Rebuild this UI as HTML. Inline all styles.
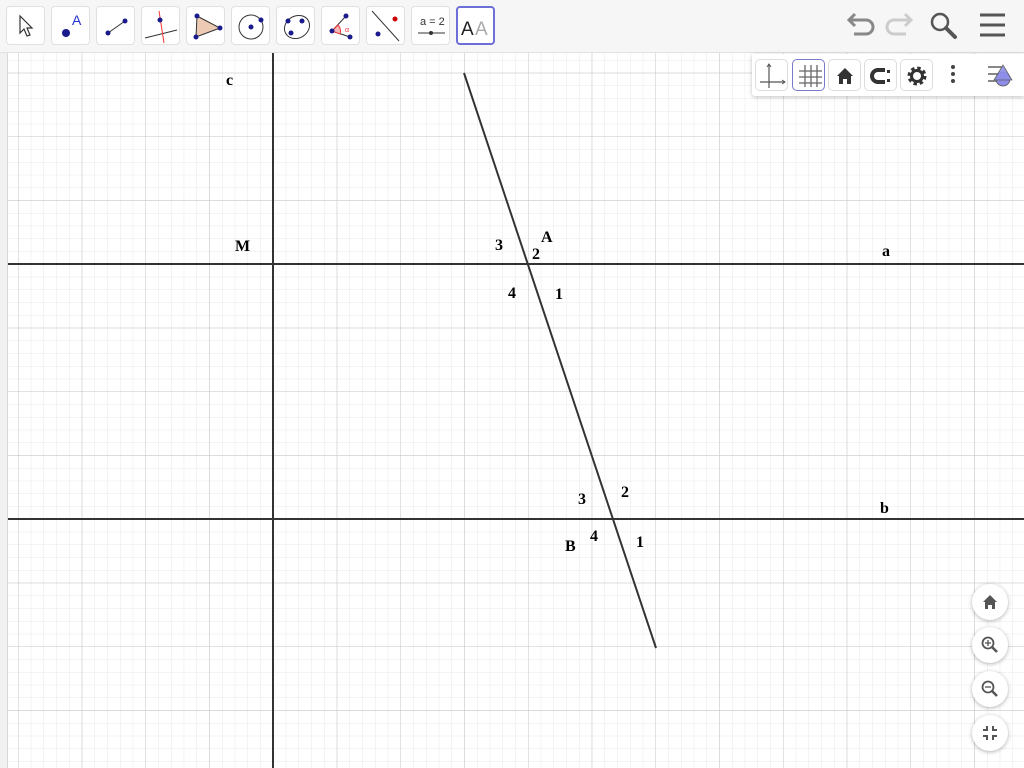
<!DOCTYPE html>
<html><head><meta charset="utf-8"><style>
*{margin:0;padding:0;box-sizing:border-box}
body{width:1024px;height:768px;overflow:hidden;background:#fff;position:relative;font-family:"Liberation Sans",sans-serif}
#tb{position:absolute;left:0;top:0;width:1024px;height:53px;background:#f6f6f6;border-bottom:1px solid #e2e2e2}
.b{position:absolute;top:6px;width:39px;height:39px;background:#fff;border:1px solid #e0e0e0;border-radius:4px}
.b svg{position:absolute;left:0;top:0}
#sb{position:absolute;left:752px;top:54px;width:272px;height:42px;background:#fff;box-shadow:0 1px 4px rgba(0,0,0,.25);border-radius:0 0 0 3px}
.s{position:absolute;top:5px;width:33px;height:32px;border:1px solid #ddd;border-radius:5px;background:#fff}
.z{position:absolute;left:972px;width:36px;height:36px;border-radius:50%;background:#fff;box-shadow:0 1px 4px rgba(0,0,0,.3)}
.z svg{position:absolute;left:0;top:0}
.l{position:absolute;font-family:"Liberation Serif",serif;font-weight:bold;font-size:16px;color:#000}
</style></head><body>
<svg width="1024" height="768" style="position:absolute;left:0;top:0">
<defs>
<pattern id="mi" x="18" y="9" width="12.75" height="12.75" patternUnits="userSpaceOnUse"><path d="M0 0V12.75M0 0H12.75" stroke="#e8e8e8" stroke-width="1" fill="none"/></pattern>
<pattern id="ma" x="18" y="9" width="63.75" height="63.75" patternUnits="userSpaceOnUse"><path d="M0 0V63.75M0 0H63.75" stroke="#c4c4c4" stroke-width="1" fill="none"/></pattern>
</defs>
<rect x="8" y="53" width="1016" height="715" fill="url(#mi)"/>
<rect x="8" y="53" width="1016" height="715" fill="url(#ma)"/>
<rect x="0" y="53" width="8" height="715" fill="#f1f1f1"/>
<line x1="7.5" y1="53" x2="7.5" y2="768" stroke="#d8d8d8"/>
<line x1="273" y1="53" x2="273" y2="768" stroke="#333" stroke-width="2"/>
<line x1="8" y1="264" x2="1024" y2="264" stroke="#333" stroke-width="2"/>
<line x1="8" y1="519" x2="1024" y2="519" stroke="#333" stroke-width="2"/>
<line x1="464" y1="73" x2="656" y2="648" stroke="#333" stroke-width="2"/>
</svg>
<div class="l" style="left:226px;top:72px">c</div>
<div class="l" style="left:235px;top:238px">M</div>
<div class="l" style="left:882px;top:243px">a</div>
<div class="l" style="left:880px;top:500px">b</div>
<div class="l" style="left:541px;top:229px">A</div>
<div class="l" style="left:495px;top:237px">3</div>
<div class="l" style="left:532px;top:246px">2</div>
<div class="l" style="left:508px;top:285px">4</div>
<div class="l" style="left:555px;top:286px">1</div>
<div class="l" style="left:578px;top:491px">3</div>
<div class="l" style="left:621px;top:484px">2</div>
<div class="l" style="left:590px;top:528px">4</div>
<div class="l" style="left:636px;top:534px">1</div>
<div class="l" style="left:565px;top:538px">B</div>

<div id="tb">
<div class="b" style="left:6px"><svg width="39" height="39"><path d="M13 9 L13 26 L17 22 L20 29 L23 28 L20 21 L25 21 Z" fill="#fff" stroke="#333" stroke-width="1.2"/></svg></div>
<div class="b" style="left:51px"><svg width="39" height="39"><circle cx="14" cy="26" r="4" fill="#1a1a8c"/><text x="20" y="18" font-size="14" fill="#2233cc" font-family="Liberation Sans">A</text></svg></div>
<div class="b" style="left:96px"><svg width="39" height="39"><line x1="11" y1="26" x2="28" y2="14" stroke="#333"/><circle cx="11" cy="26" r="2.5" fill="#1a1a8c"/><circle cx="28" cy="14" r="2.5" fill="#1a1a8c"/></svg></div>
<div class="b" style="left:141px"><svg width="39" height="39"><line x1="3" y1="31" x2="35" y2="23" stroke="#333"/><line x1="17" y1="4" x2="22" y2="36" stroke="#e33"/><circle cx="18" cy="13" r="2.5" fill="#1a1a8c"/></svg></div>
<div class="b" style="left:186px"><svg width="39" height="39"><path d="M10 9 L33 21 L9 30 Z" fill="#eccab4" stroke="#333"/><circle cx="10" cy="9" r="2.5" fill="#1a1a8c"/><circle cx="33" cy="21" r="2.5" fill="#1a1a8c"/><circle cx="9" cy="30" r="2.5" fill="#1a1a8c"/></svg></div>
<div class="b" style="left:231px"><svg width="39" height="39"><circle cx="19" cy="20" r="12" fill="none" stroke="#333"/><circle cx="19" cy="20" r="2.5" fill="#1a1a8c"/><circle cx="29" cy="13" r="2.5" fill="#1a1a8c"/></svg></div>
<div class="b" style="left:276px"><svg width="39" height="39"><ellipse cx="20" cy="20" rx="13" ry="11" transform="rotate(-30 20 20)" fill="none" stroke="#333"/><circle cx="11" cy="14" r="2.5" fill="#1a1a8c"/><circle cx="25" cy="14" r="2.5" fill="#1a1a8c"/><circle cx="14" cy="26" r="2.5" fill="#1a1a8c"/></svg></div>
<div class="b" style="left:321px"><svg width="39" height="39"><path d="M10 24 L24 9 M10 24 L28 30" stroke="#333" fill="none"/><path d="M10 24 L16 18 A9 9 0 0 1 18 27 Z" fill="#f4b8b8" stroke="#e33"/><text x="23" y="25" font-size="7" fill="#e33">α</text><circle cx="10" cy="24" r="2.5" fill="#1a1a8c"/><circle cx="24" cy="9" r="2.5" fill="#1a1a8c"/><circle cx="28" cy="30" r="2.5" fill="#1a1a8c"/></svg></div>
<div class="b" style="left:366px"><svg width="39" height="39"><line x1="5" y1="4" x2="32" y2="34" stroke="#333"/><circle cx="28" cy="12" r="2.5" fill="#c00"/><circle cx="11" cy="27" r="2.5" fill="#1a1a8c"/></svg></div>
<div class="b" style="left:411px"><svg width="39" height="39"><text x="8" y="18" font-size="11" fill="#333" font-family="Liberation Sans">a = 2</text><line x1="6" y1="26" x2="33" y2="26" stroke="#333"/><circle cx="19" cy="26" r="2" fill="#333"/></svg></div>
<div class="b" style="left:456px;border:2px solid #6e6ed8"><svg width="39" height="39"><text x="3" y="27" font-size="19" fill="#222" font-family="Liberation Sans">A</text><text x="17" y="27" font-size="19" fill="#aaa" font-family="Liberation Sans">A</text></svg></div>
<svg width="200" height="53" style="position:absolute;left:830px;top:0">
<path d="M21 20 H36 A7 7 0 0 1 36 34 H24" fill="none" stroke="#888" stroke-width="3"/><path d="M25 14 L19 20 L25 26" fill="none" stroke="#888" stroke-width="3"/>
<path d="M79 20 H64 A7 7 0 0 0 64 34 H76" fill="none" stroke="#ccc" stroke-width="3"/><path d="M75 14 L81 20 L75 26" fill="none" stroke="#ccc" stroke-width="3"/>
<circle cx="110" cy="22" r="8" fill="none" stroke="#555" stroke-width="2.5"/><line x1="116" y1="28" x2="125" y2="37" stroke="#555" stroke-width="4" stroke-linecap="round"/>
<path d="M150 15H175M150 25H175M150 35H175" stroke="#555" stroke-width="3"/>
</svg>
</div>
<div id="sb">
<div class="s" style="left:3px"><svg width="33" height="32"><path d="M13 4 V28 M4 22 H29" stroke="#555" fill="none" stroke-width="1.2"/><path d="M11 7 L13 4 L15 7 M26 20 L29 22 L26 24" fill="none" stroke="#555"/></svg></div>
<div class="s" style="left:40px;border-color:#7a7acc"><svg width="33" height="32"><path d="M12 5V27M18 5V27M24 5V27M6 11H29M6 17H29M6 23H29" stroke="#666" stroke-width="1.3"/></svg></div>
<div class="s" style="left:76px"><svg width="33" height="32"><path d="M8 16 L16 8 L24 16 L22 16 L22 24 L18 24 L18 19 L14 19 L14 24 L10 24 L10 16 Z" fill="#333"/></svg></div>
<div class="s" style="left:112px"><svg width="33" height="32"><path d="M20 10 H13 A6 6 0 0 0 13 22 H20" fill="none" stroke="#333" stroke-width="4"/><rect x="22" y="10" width="3" height="3" fill="#333"/><rect x="22" y="19" width="3" height="3" fill="#333"/></svg></div>
<div class="s" style="left:148px"><svg width="33" height="32"><circle cx="16" cy="16" r="7" fill="none" stroke="#333" stroke-width="5" stroke-dasharray="3 2.5"/><circle cx="16" cy="16" r="5.5" fill="none" stroke="#333" stroke-width="3"/></svg></div>
<svg width="80" height="42" style="position:absolute;left:190px;top:0"><circle cx="11" cy="13" r="2" fill="#444"/><circle cx="11" cy="20" r="2" fill="#444"/><circle cx="11" cy="27" r="2" fill="#444"/>
<path d="M46 13H60M46 20H56M46 27H56" stroke="#888" stroke-width="2"/><circle cx="61" cy="25" r="7" fill="#8e8ee8" stroke="#555" stroke-width=".8"/><path d="M61 11 L70 26 L52 26 Z" fill="#8e8ee8" stroke="#555" stroke-width=".8" opacity=".9"/></svg>
</div>
<div class="z" style="top:584px"><svg width="36" height="36"><path d="M11 18 L18 11 L25 18 L23 18 L23 25 L20 25 L20 21 L16 21 L16 25 L13 25 L13 18 Z" fill="#555"/></svg></div>
<div class="z" style="top:627px"><svg width="36" height="36"><circle cx="16" cy="16" r="5.5" fill="none" stroke="#555" stroke-width="1.8"/><line x1="20" y1="20" x2="25" y2="25" stroke="#555" stroke-width="2.5"/><path d="M13 16H19M16 13V19" stroke="#555" stroke-width="1.3"/></svg></div>
<div class="z" style="top:671px"><svg width="36" height="36"><circle cx="16" cy="16" r="5.5" fill="none" stroke="#555" stroke-width="1.8"/><line x1="20" y1="20" x2="25" y2="25" stroke="#555" stroke-width="2.5"/><path d="M13 16H19" stroke="#555" stroke-width="1.3"/></svg></div>
<div class="z" style="top:715px"><svg width="36" height="36"><path d="M11 15H15V11M25 15H21V11M11 21H15V25M25 21H21V25" fill="none" stroke="#555" stroke-width="2"/></svg></div>
</body></html>
